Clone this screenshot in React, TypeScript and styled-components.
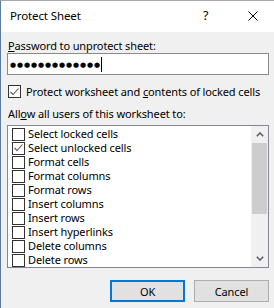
import React from 'react'
import styled, { createGlobalStyle } from 'styled-components'

const GlobalStyle = createGlobalStyle`
    html, body {
        margin: 0;
        padding: 0;
        background: #f0f0f0;
    }
    body {
        font-family: "Noto Sans", "Liberation Sans", sans-serif;
        font-size: 11px;
        letter-spacing: -0.12px;
        color: #000;
    }
`

const Dialog = styled.div`
    width: 273px;
    height: 307px;
    display: flex;
    flex-direction: column;
    background: #f0f0f0;
    border-left: 1px solid #5a7ca0;
    border-top: 1px solid #a9a9a9;
    overflow: hidden;
`

const TitleBar = styled.div`
    height: 31px;
    background: #fff;
    display: flex;
    align-items: center;
    padding-left: 9px;
`

const Title = styled.span`
    flex: 1;
    font-size: 11.5px;
    line-height: 16px;
    margin-top: -1px;
`

const Help = styled.span`
    width: 16px;
    font-size: 12.5px;
    line-height: 16px;
    margin-right: 29px;
    margin-top: -1px;
`

const Close = styled.svg`
    width: 10px;
    height: 10px;
    margin-right: 16px;
    margin-top: -1px;
`

const Body = styled.div`
    flex: 1;
    display: flex;
    flex-direction: column;
    padding: 0 5px 0 6px;
`

const Label = styled.div<{ $top: number }>`
    height: 15px;
    line-height: 15px;
    padding-left: 1px;
    margin-top: ${p => p.$top}px;
    white-space: nowrap;
`

const PasswordBox = styled.div`
    height: 20px;
    background: #fff;
    border: 1px solid #8a8a8a;
    display: flex;
    align-items: center;
    padding-left: 2px;
`

const Dots = styled.span`
    font-family: "DejaVu Sans", sans-serif;
    font-size: 7px;
    letter-spacing: 0.9px;
    line-height: 10px;
    margin-top: 2px;
`

const Caret = styled.span`
    width: 1px;
    height: 15px;
    background: #000;
    margin-left: 0px;
`

const CheckRow = styled.label`
    display: flex;
    align-items: center;
    height: 13px;
    margin-top: 10px;
    padding-left: 1px;
    white-space: nowrap;
`

const Box = styled.span`
    width: 11px;
    height: 11px;
    flex: none;
    background: #fff;
    border: 1px solid #333;
    display: flex;
    align-items: center;
    justify-content: center;
    margin-right: 5px;
`

const ListBox = styled.div`
    height: 141px;
    margin-top: 4px;
    background: #fff;
    border: 1px solid #828790;
    display: flex;
    overflow: hidden;
`

const Items = styled.div`
    flex: 1;
    padding: 1px 0 0 4px;
`

const Item = styled.div`
    height: 14px;
    display: flex;
    align-items: center;
    white-space: nowrap;
    line-height: 14px;
`

const ItemBox = styled(Box)`
    margin-right: 3px;
`

const ScrollBar = styled.div`
    width: 17px;
    background: #f0f0f0;
    display: flex;
    flex-direction: column;
`

const ArrowButton = styled.div`
    height: 17px;
    display: flex;
    align-items: center;
    justify-content: center;
`

const Thumb = styled.div`
    height: 71px;
    margin: 0 1px;
    background: #cdcdcd;
`

const Track = styled.div`
    flex: 1;
`

const ButtonRow = styled.div`
    display: flex;
    justify-content: flex-end;
    gap: 9px;
    margin-top: 12px;
`

const Button = styled.button<{ $default?: boolean }>`
    width: 75px;
    height: 22px;
    box-sizing: border-box;
    background: #e1e1e1;
    border: ${p => (p.$default ? '2px solid #0078d7' : '1px solid #adadad')};
    font-family: "Noto Sans", "Liberation Sans", sans-serif;
    font-size: 11px;
    letter-spacing: -0.12px;
    color: #000;
    padding: 0;
`

const Check = () => (
    <svg width="9" height="8" viewBox="0 0 9 8">
        <path d="M0.5 4 L3 6.5 L8.5 0.5" fill="none" stroke="#555" strokeWidth="1.1" />
    </svg>
)

const Chevron = ({ up }: { up?: boolean }) => (
    <svg width="8" height="5" viewBox="0 0 8 5">
        <path d={up ? 'M0.8 4.2 L4 1 L7.2 4.2' : 'M0.8 0.8 L4 4 L7.2 0.8'} fill="none" stroke="#606060" strokeWidth="1.6" />
    </svg>
)

const permissions = [
    { name: 'Select locked cells', checked: false },
    { name: 'Select unlocked cells', checked: true },
    { name: 'Format cells', checked: false },
    { name: 'Format columns', checked: false },
    { name: 'Format rows', checked: false },
    { name: 'Insert columns', checked: false },
    { name: 'Insert rows', checked: false },
    { name: 'Insert hyperlinks', checked: false },
    { name: 'Delete columns', checked: false },
    { name: 'Delete rows', checked: false },
]

const App: React.FC = () => {
    return (
        <Dialog>
            <GlobalStyle />
            <TitleBar>
                <Title>Protect Sheet</Title>
                <Help>?</Help>
                <Close viewBox="0 0 10 10">
                    <path d="M0.5 0.5 L9.5 9.5 M9.5 0.5 L0.5 9.5" stroke="#000" strokeWidth="1" />
                </Close>
            </TitleBar>
            <Body>
                <Label $top={6}><u>P</u>assword to unprotect sheet:</Label>
                <PasswordBox>
                    <Dots>●●●●●●●●●●●●●</Dots>
                    <Caret />
                </PasswordBox>
                <CheckRow>
                    <Box><Check /></Box>
                    <span>Protect worksheet and <u>c</u>ontents of locked cells</span>
                </CheckRow>
                <Label $top={8}>All<u>o</u>w all users of this worksheet to:</Label>
                <ListBox>
                    <Items>
                        {permissions.map(p => (
                            <Item key={p.name}>
                                <ItemBox>{p.checked && <Check />}</ItemBox>
                                {p.name}
                            </Item>
                        ))}
                    </Items>
                    <ScrollBar>
                        <ArrowButton><Chevron up /></ArrowButton>
                        <Thumb />
                        <Track />
                        <ArrowButton><Chevron /></ArrowButton>
                    </ScrollBar>
                </ListBox>
                <ButtonRow>
                    <Button $default>OK</Button>
                    <Button>Cancel</Button>
                </ButtonRow>
            </Body>
        </Dialog>
    )
}

export default App
